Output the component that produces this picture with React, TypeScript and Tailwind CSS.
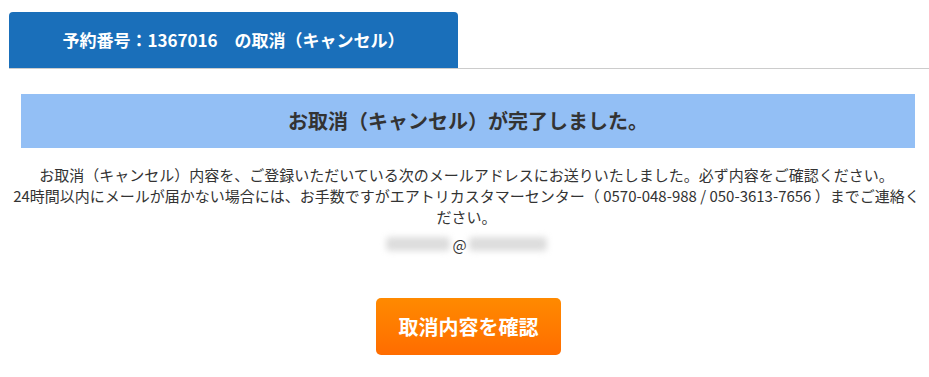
export default function App() {
  const font = { fontFamily: '"Noto Sans CJK JP", "Noto Sans", sans-serif' };
  return (
    <div className="w-[929px] h-[377px] bg-white overflow-hidden" style={font}>
      <div className="pt-[12px] pl-[9px]">
        <div className="border-b border-[#cccccc] flex">
          <div className="w-[449px] h-[56px] bg-[#1a6fba] rounded-t-[4px] flex items-center justify-center text-white font-bold text-[17px]">
            予約番号：1367016　の取消（キャンセル）
          </div>
        </div>
      </div>
      <div className="ml-[21px] mr-[14px] mt-[25px] h-[54px] bg-[#93bff5] flex items-center justify-center text-[20px] font-bold text-[#333333]">
        お取消（キャンセル）が完了しました。
      </div>
      <div className="mt-[16px] pl-[10px] pr-[6px] text-center text-[15px] leading-[21px] text-[#333333]">
        <p>お取消（キャンセル）内容を、ご登録いただいている次のメールアドレスにお送りいたしました。必ず内容をご確認ください。</p>
        <p>24時間以内にメールが届かない場合には、お手数ですがエアトリカスタマーセンター（ 0570-048-988 / 050-3613-7656 ）までご連絡ください。</p>
        <div className="mt-[7px] flex items-center justify-center h-[20px]">
          <span className="inline-block w-[64px] h-[14px] bg-[#dddddd] blur-[3px] rounded"></span>
          <span className="mx-[2px]">@</span>
          <span className="inline-block w-[78px] h-[14px] bg-[#dddddd] blur-[3px] rounded"></span>
        </div>
      </div>
      <div className="mt-[44px] pl-[8px] flex justify-center">
        <button className="w-[185px] h-[57px] rounded-[5px] bg-gradient-to-b from-[#ff8a00] to-[#ff6c00] text-white font-bold text-[20px]">
          取消内容を確認
        </button>
      </div>
    </div>
  );
}
